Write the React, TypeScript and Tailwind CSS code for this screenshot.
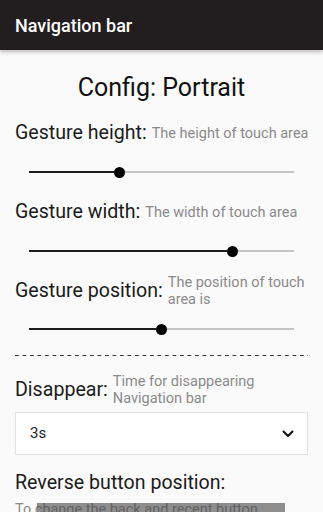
import React from "react";

function Slider({ active }: { active: string }) {
  return (
    <div className="flex items-center px-[14px]">
      <div className={`h-[2px] bg-[#1c1c1c] ${active}`} />
      <div className="h-[11px] w-[11px] shrink-0 rounded-full bg-black" />
      <div className="h-[2px] flex-1 bg-[#c4c4c4]" />
    </div>
  );
}

function Row({ label, sub, h }: { label: string; sub: React.ReactNode; h: string }) {
  return (
    <div className={`flex items-center gap-[5px] ${h}`}>
      <span className="text-[19.6px] leading-[24px] text-[#1b1b1b] whitespace-nowrap">{label}</span>
      <span className="text-[14.5px] leading-[17px] text-[#8a8a8a] whitespace-nowrap">{sub}</span>
    </div>
  );
}

export default function App() {
  return (
    <div
      className="relative h-[512px] w-[323px] overflow-hidden bg-[#fafafa]"
      style={{ fontFamily: "Roboto, 'Noto Sans', sans-serif" }}
    >
      <div className="relative z-10 flex h-[50px] items-center bg-[#221e1f] px-[15px] shadow-[0_2px_4px_rgba(0,0,0,0.25)]">
        <span className="text-[18px] font-medium text-white">Navigation bar</span>
      </div>

      <div className="flex flex-col px-[15px]">
        <div className="mt-[24px] flex h-[28px] items-center justify-center">
          <span className="text-[25px] text-[#111]">Config: Portrait</span>
        </div>

        <div className="mt-[14px]">
          <Row label="Gesture height:" sub="The height of touch area" h="h-[34px]" />
        </div>
        <div className="flex h-[44px] flex-col justify-center">
          <Slider active="w-[85px]" />
        </div>

        <Row label="Gesture width:" sub="The width of touch area" h="h-[36px]" />
        <div className="flex h-[42px] flex-col justify-center">
          <Slider active="w-[198px]" />
        </div>

        <Row
          label="Gesture position:"
          sub={
            <>
              The position of touch
              <br />
              area is
            </>
          }
          h="h-[38px]"
        />
        <div className="flex h-[38px] flex-col justify-center">
          <Slider active="w-[127px]" />
        </div>

        <div className="mt-[7px] h-[1px] w-full bg-[linear-gradient(to_right,#333_55%,transparent_55%)] bg-[length:7.5px_1px]" />

        <div className="mt-[14px]">
          <Row
            label="Disappear:"
            sub={
              <>
                Time for disappearing
                <br />
                Navigation bar
              </>
            }
            h="h-[40px]"
          />
        </div>

        <div className="mt-[2px] flex h-[43px] items-center justify-between border border-[#e3e3e3] bg-white pl-[14px] pr-[13px]">
          <span className="text-[15px] text-[#1b1b1b]">3s</span>
          <svg width="12" height="8" viewBox="0 0 12 8" fill="none">
            <path d="M1.5 1.5 L6 6 L10.5 1.5" stroke="#111" strokeWidth="2" strokeLinecap="round" strokeLinejoin="round" />
          </svg>
        </div>

        <div className="mt-[11px] flex h-[34px] items-center">
          <span className="text-[19.6px] text-[#1b1b1b]">Reverse button position:</span>
        </div>
        <div className="text-[14.5px] leading-[20px] text-[#8a8a8a] whitespace-nowrap">
          To change the back and recent button
        </div>
      </div>

      <div className="absolute left-[37px] top-[503px] h-[10px] w-[248px] bg-[rgba(70,70,70,0.6)]" />
    </div>
  );
}
